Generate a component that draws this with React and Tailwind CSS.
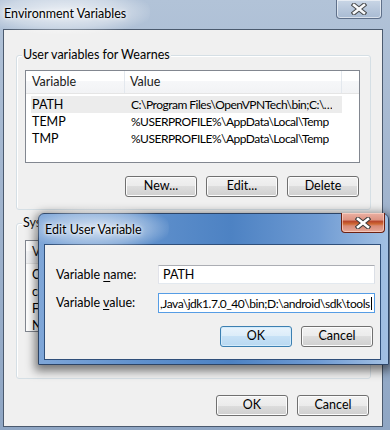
import React from "react";

function Btn({ children, def = false }) {
  return (
    <div
      className={
        def
          ? "flex h-[21px] w-[72px] items-center justify-center rounded-[3px] border border-[#3c7fb1] bg-[linear-gradient(#e8f3fc_0%,#dbecf9_50%,#c6e1f6_50%,#b9d8f1_100%)] shadow-[inset_0_0_0_1px_#d3ebfb] text-black"
          : "flex h-[21px] w-[72px] items-center justify-center rounded-[3px] border border-[#707070] bg-[linear-gradient(#f2f2f2_0%,#ebebeb_50%,#dddddd_50%,#cfcfcf_100%)] shadow-[inset_0_0_0_1px_#fcfcfc] text-black"
      }
    >
      {children}
    </div>
  );
}

function ListView({ rows, selected = -1, tall = true }) {
  return (
    <div
      className={
        tall
          ? "h-[93px] w-[335px] overflow-hidden border border-[#828790] bg-white"
          : "h-[92px] w-[335px] overflow-hidden border border-[#828790] bg-white"
      }
    >
      <div className="flex h-[23px] border-b border-[#e5e5e5] bg-[linear-gradient(#ffffff_0%,#ffffff_45%,#f6f7f9_45%,#f2f3f5_100%)] text-[#1a1a1a]">
        <div className="flex h-full w-[99px] items-center border-r border-[#e3e8ee] pl-[6px] pt-[1px]">Variable</div>
        <div className="flex h-full w-[217px] items-center border-r border-[#e3e8ee] pl-[5px] pt-[1px]">Value</div>
        <div className="flex-1" />
      </div>
      <div className="pt-[2px]">
        {rows.map(([a, b], i) => (
          <div key={i} className="flex h-[17px] items-center leading-[17px]">
            <div
              className={
                i === selected
                  ? "ml-[5px] flex h-full w-[311px] items-center bg-[#ececec]"
                  : "ml-[5px] flex h-full w-[311px] items-center"
              }
            >
              <span className="w-[95px] shrink-0 overflow-hidden pl-[1px] whitespace-nowrap">{a}</span>
              <span className="overflow-hidden pl-[5px] text-[12px] tracking-[-0.5px] whitespace-nowrap">{b}</span>
            </div>
          </div>
        ))}
      </div>
    </div>
  );
}

function GroupBox({ label, children, h }) {
  return (
    <div
      className={
        h === 155
          ? "relative h-[155px] w-[355px] rounded-[3px] border border-[#d5dfe5] shadow-[inset_1px_1px_0_#ffffff]"
          : "relative h-[156px] w-[355px] rounded-[3px] border border-[#d5dfe5] shadow-[inset_1px_1px_0_#ffffff]"
      }
    >
      <div className="absolute left-[5px] top-[-9px] bg-[#f0f0f0] px-[1px] leading-[16px]">{label}</div>
      {children}
    </div>
  );
}

function XGlyph({ className }) {
  return (
    <svg width="16" height="12" viewBox="0 0 16 12" className={className}>
      <path d="M3 2 L13 10 M13 2 L3 10" stroke="#3b3b3b" strokeWidth="4.6" strokeLinecap="square" />
      <path d="M3 2 L13 10 M13 2 L3 10" stroke="#ffffff" strokeWidth="2.6" strokeLinecap="square" />
    </svg>
  );
}

export default function App() {
  const userRows = [
    ["PATH", "C:\\Program Files\\OpenVPNTech\\bin;C:\\…"],
    ["TEMP", "%USERPROFILE%\\AppData\\Local\\Temp"],
    ["TMP", "%USERPROFILE%\\AppData\\Local\\Temp"],
  ];
  const sysRows = [
    ["ComSpec", "C:\\Windows\\system32\\cmd.exe"],
    ["configsetroot", "C:\\Windows\\ConfigSetRoot"],
    ["FP_NO_HOST_C...", "NO"],
    ["NUMBER_OF_P...", "4"],
  ];

  return (
    <div className="relative h-[430px] w-[390px] overflow-hidden bg-[linear-gradient(180deg,#b2c3d8_0%,#a3b6cf_40%,#8fa6c4_100%)] font-['Lato','Noto_Sans',sans-serif] text-[12.5px] leading-none text-black">
      {/* title bar */}
      <div className="relative flex h-[29px] items-start">
        <div className="pointer-events-none absolute left-[-20px] top-[-10px] h-[44px] w-[170px] rounded-full bg-[radial-gradient(ellipse_at_center,rgba(255,255,255,0.75)_0%,rgba(255,255,255,0.35)_50%,rgba(255,255,255,0)_75%)]" />
        <div className="relative pl-[4px] pt-[8px] [text-shadow:0_0_6px_#ffffff,0_0_3px_#ffffff]">Environment Variables</div>
        <div className="ml-auto mr-[8px] flex h-[19px] w-[46px] items-center justify-center rounded-b-[4px] border border-t-0 border-[#5f708a] bg-[linear-gradient(#c9d6e6_0%,#b8c8dc_50%,#a9bbd3_100%)] shadow-[inset_0_0_0_1px_rgba(255,255,255,0.55)]">
          <XGlyph className="opacity-90" />
        </div>
      </div>

      {/* client area */}
      <div className="ml-[3px] h-[398px] w-[380px] border border-[#4b5a6e] bg-[#f0f0f0] pl-[12px] pt-[25px]">
        <GroupBox label="User variables for Wearnes" h={155}>
          <div className="ml-[8px] mt-[14px]">
            <ListView rows={userRows} selected={0} />
          </div>
          <div className="ml-[108px] mt-[13px] flex gap-[9px]">
            <Btn>New...</Btn>
            <Btn>Edit...</Btn>
            <Btn>Delete</Btn>
          </div>
        </GroupBox>

        <div className="mt-[13px]">
          <GroupBox label="System variables" h={156}>
            <div className="ml-[8px] mt-[16px]">
              <ListView rows={sysRows} tall={false} />
            </div>
          </GroupBox>
        </div>

        <div className="ml-[200px] mt-[16px] flex gap-[9px]">
          <Btn>OK</Btn>
          <Btn>Cancel</Btn>
        </div>
      </div>

      {/* Edit User Variable dialog */}
      <div className="absolute left-[38px] top-[213px] h-[152px] w-[351px] rounded-t-[6px] border border-[#2c4466] bg-[linear-gradient(90deg,#7ea6d8_0%,#5f90cc_30%,#4d82c3_55%,#6f9bd3_80%,#a2c0e3_100%)] shadow-[0_3px_10px_3px_rgba(0,0,0,0.5)]">
        <div className="relative flex h-[30px] items-start">
          <div className="pointer-events-none absolute left-[-10px] top-[-8px] h-[44px] w-[140px] rounded-full bg-[radial-gradient(ellipse_at_center,rgba(255,255,255,0.7)_0%,rgba(255,255,255,0.3)_50%,rgba(255,255,255,0)_75%)]" />
          <div className="relative pl-[6px] pt-[10px] [text-shadow:0_0_6px_#ffffff,0_0_3px_#ffffff]">Edit User Variable</div>
          <div className="ml-auto mr-[3px] mt-[-1px] flex h-[20px] w-[44px] items-center justify-center rounded-b-[4px] border border-t-0 border-[#6b2113] bg-[linear-gradient(#eab0a2_0%,#de9584_35%,#b9472b_45%,#cf6a34_58%,#d98b78_68%,#e6a898_100%)] shadow-[inset_0_0_0_1px_rgba(255,220,210,0.6)]">
            <XGlyph />
          </div>
        </div>
        <div className="ml-[5px] h-[116px] w-[337px] border border-[#2f4f7a] bg-[#f0f0f0] pl-[11px] pt-[20px]">
          <div className="flex h-[19px] items-center">
            <div className="w-[102px] pt-[1px] whitespace-nowrap">
              Variable <span className="underline underline-offset-2">n</span>ame:
            </div>
            <div className="flex h-[19px] w-[217px] items-center border border-[#abadb3] border-l-[#e2e3ea] border-r-[#dbdfe6] border-b-[#e3e9ef] bg-white pl-[4px] pt-[1px]">
              PATH
            </div>
          </div>
          <div className="mt-[9px] flex h-[20px] items-center">
            <div className="w-[102px] pt-[1px] whitespace-nowrap">
              Variable <span className="underline underline-offset-2">v</span>alue:
            </div>
            <div className="flex h-[20px] w-[217px] items-center overflow-hidden border border-[#569de5] bg-white pl-[1px] pt-[1px] whitespace-nowrap">
              <span className="text-[12px] tracking-[-0.45px]">,Java\jdk1.7.0_40\bin;D:\android\sdk\tools</span>
              <span className="ml-[1px] inline-block h-[13px] w-[1px] shrink-0 bg-black" />
            </div>
          </div>
          <div className="ml-[164px] mt-[13px] flex gap-[9px]">
            <Btn def>OK</Btn>
            <Btn>Cancel</Btn>
          </div>
        </div>
      </div>
    </div>
  );
}
